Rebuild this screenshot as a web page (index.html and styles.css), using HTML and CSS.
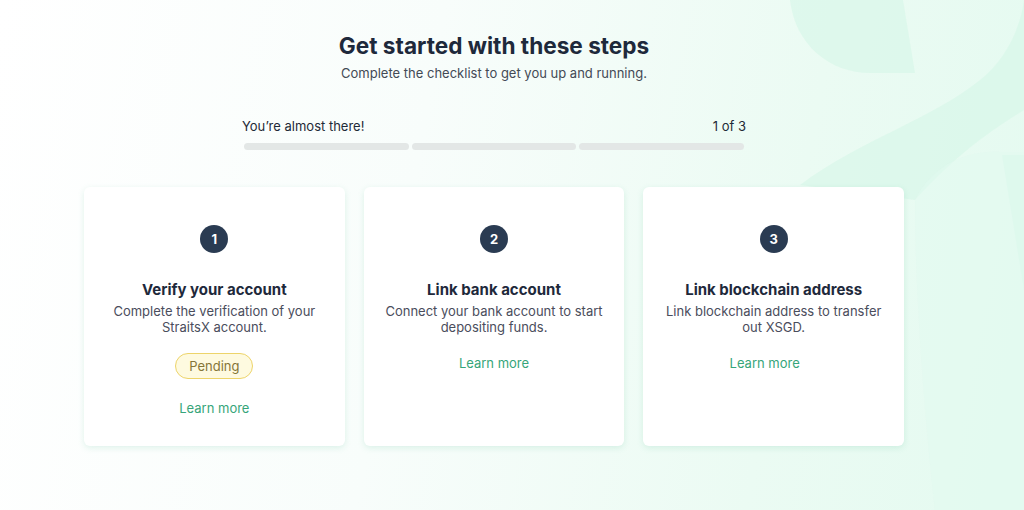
FILE: index.html
```html
<!DOCTYPE html>
<html lang="en">
<head>
    <meta charset="UTF-8">
    <meta name="viewport" content="width=device-width, initial-scale=1.0">
    <title>Get started</title>
    <link rel="stylesheet" href="styles.css">
</head>
<body>
    <!-- background decoration -->
    <svg class="bg-shapes" width="1024" height="510" viewBox="0 0 1024 510">
        <path d="M790 0 C795 45 830 73 870 73 L915 73 L903 0 Z" fill="#d6f7e8" opacity="0.6"/>
        <path d="M800 185 C860 140 930 120 980 80 C1005 60 1020 30 1024 0 L1024 110 C1000 125 960 150 915 200 Z" fill="#d6f7e8" opacity="0.6"/>
        <path d="M1002 155 L1024 155 L1024 290 Z" fill="#d6f7e8" opacity="0.7"/>
        <path d="M915 200 C930 170 960 150 1000 152 L1024 152 L1024 510 L935 510 C925 420 915 300 915 200 Z" fill="#e2faef" opacity="0.5"/>
    </svg>

    <main class="page">
        <header class="intro">
            <h1>Get started with these steps</h1>
            <p>Complete the checklist to get you up and running.</p>
        </header>

        <!-- Progress -->
        <section class="progress">
            <div class="progress-head">
                <span>You’re almost there!</span>
                <span>1 of 3</span>
            </div>
            <div class="progress-bars">
                <div class="bar"></div>
                <div class="bar"></div>
                <div class="bar"></div>
            </div>
        </section>

        <!-- Steps -->
        <section class="steps">
            <div class="card">
                <div class="num">1</div>
                <h2>Verify your account</h2>
                <p>Complete the verification of your StraitsX account.</p>
                <span class="pill">Pending</span>
                <a href="#" class="learn">Learn more</a>
            </div>
            <div class="card">
                <div class="num">2</div>
                <h2>Link bank account</h2>
                <p>Connect your bank account to start depositing funds.</p>
                <a href="#" class="learn">Learn more</a>
            </div>
            <div class="card">
                <div class="num">3</div>
                <h2>Link blockchain address</h2>
                <p>Link blockchain address to transfer out XSGD.</p>
                <a href="#" class="learn learn-shift">Learn more</a>
            </div>
        </section>
    </main>
</body>
</html>
```

FILE: styles.css
```css
body {
    font-family: Inter, "Noto Sans", sans-serif;
    margin: 0;
    padding: 0;
    height: 510px;
    overflow: hidden;
    position: relative;
    color: #1f2a37;
    background: linear-gradient(100deg, #ffffff 0%, #f8fdfb 40%, #ebfbf3 75%, #e4faf0 100%);
}
.bg-shapes {
    position: absolute;
    top: 0;
    left: 0;
}
.page {
    position: relative;
    width: 820px;
    margin: 0 auto;
    padding: 32px 36px 0 0;
}
.intro {
    text-align: center;
}
.intro h1 {
    font-size: 22.6px;
    font-weight: 700;
    line-height: 28px;
    margin: 0;
    color: #1e293b;
}
.intro p {
    font-size: 13px;
    line-height: 16px;
    margin: 5px 0 0;
    color: #434a55;
}
.progress {
    width: 504px;
    margin: 37px auto 0;
}
.progress-head {
    display: flex;
    justify-content: space-between;
    font-size: 13px;
    line-height: 16px;
    color: #1f2a37;
}
.progress-bars {
    display: flex;
    gap: 3px;
    margin: 9px 0 0 2px;
    width: 500px;
}
.bar {
    flex: 1;
    height: 7px;
    border-radius: 4px;
    background: #e3e7e6;
}
.steps {
    display: flex;
    gap: 19px;
    margin-top: 37px;
}
.card {
    flex: 1;
    height: 259px;
    box-sizing: border-box;
    background: #fff;
    border-radius: 6px;
    box-shadow: 0 2px 6px rgba(90, 190, 150, 0.18);
    padding: 38px 20px 0;
    display: flex;
    flex-direction: column;
    align-items: center;
    text-align: center;
}
.num {
    width: 28px;
    height: 28px;
    border-radius: 50%;
    background: #2a3b52;
    color: #fff;
    font-size: 13px;
    font-weight: 700;
    line-height: 28px;
}
.card h2 {
    font-size: 15px;
    font-weight: 700;
    line-height: 20px;
    margin: 27px 0 3px;
    color: #1e293b;
}
.card p {
    font-size: 13px;
    line-height: 16px;
    margin: 0;
    color: #4a4d5c;
    max-width: 222px;
}
.pill {
    margin-top: 18px;
    height: 26px;
    box-sizing: border-box;
    padding: 0 13px;
    border: 1px solid #edd46a;
    border-radius: 13px;
    background: #fefae0;
    color: #857638;
    font-size: 13px;
    line-height: 24px;
}
.learn {
    margin-top: 20px;
    font-size: 13px;
    line-height: 16px;
    color: #36a57a;
    text-decoration: none;
}
.pill + .learn {
    margin-top: 21px;
}
.learn-shift {
    margin-right: 18px;
}
```
